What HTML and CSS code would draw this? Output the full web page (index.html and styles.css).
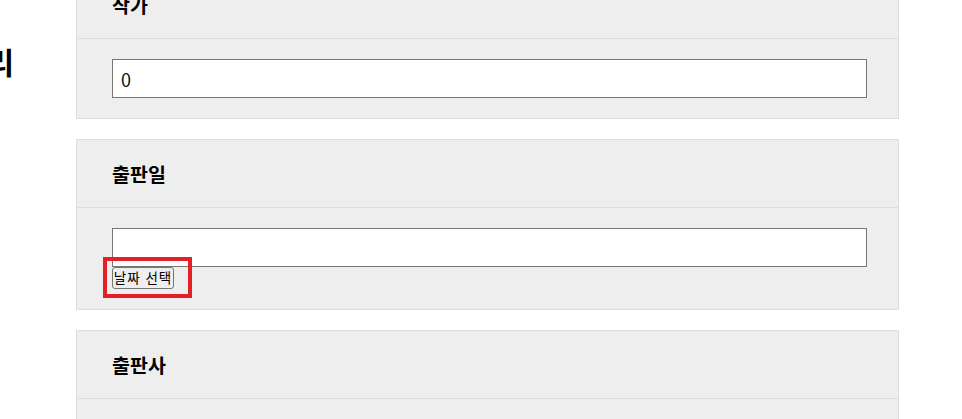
FILE: index.html
```html
<!DOCTYPE html>
<html lang="ko">
<head>
<meta charset="utf-8">
<title>도서 관리</title>
<link rel="stylesheet" href="styles.css">
</head>
<body>
<div class="page">
  <aside class="side">
    <h1 class="title">도서 관리</h1>
  </aside>
  <main class="form">
    <section class="card">
      <div class="card-head"><h3 class="label">작가</h3></div>
      <div class="card-body">
        <input class="field" type="text" value="0">
      </div>
    </section>
    <section class="card">
      <div class="card-head"><h3 class="label">출판일</h3></div>
      <div class="card-body">
        <input class="field" type="text" value="">
        <div class="date-actions">
          <button class="date-btn" type="button">날짜 선택</button>
          <span class="highlight"></span>
        </div>
      </div>
    </section>
    <section class="card">
      <div class="card-head"><h3 class="label">출판사</h3></div>
      <div class="card-body">
        <input class="field" type="text" value="">
      </div>
    </section>
  </main>
</div>
</body>
</html>
```
FILE: styles.css
```css
html, body {
  margin: 0;
  padding: 0;
  background: #ffffff;
}
body {
  font-family: "Noto Sans CJK KR", "Noto Sans", sans-serif;
  color: #000;
  overflow: hidden;
}
.page {
  display: flex;
  align-items: flex-start;
  margin-top: -30px;
}
.side {
  width: 14px;
  margin-right: 62px;
  display: flex;
  justify-content: flex-end;
  padding-top: 73px;
}
.title {
  margin: 0;
  font-size: 30px;
  font-weight: 700;
  line-height: 1.2;
  white-space: nowrap;
}
.form {
  width: 823px;
  display: flex;
  flex-direction: column;
  gap: 20px;
}
.card {
  background: #eeeeee;
  border: 1px solid #dcdce1;
}
.card-head {
  height: 67px;
  display: flex;
  align-items: center;
  padding: 0 35px;
  border-bottom: 1px solid #dcdce1;
}
.label {
  margin: 0;
  font-size: 19.5px;
  font-weight: 700;
  line-height: 1;
}
.card-body {
  padding: 20px 31px 20px 35px;
}
.field {
  display: block;
  width: 100%;
  height: 39px;
  box-sizing: border-box;
  margin: 0;
  border: 1px solid #767676;
  border-radius: 0;
  background: #fff;
  padding: 0 8px;
  font-family: "Noto Sans CJK KR", "Noto Sans", sans-serif;
  font-size: 18px;
  color: #111;
}
.date-actions {
  position: relative;
  display: flex;
}
.date-btn {
  height: 22px;
  width: 62px;
  margin: 0;
  padding: 0;
  box-sizing: border-box;
  border: 1px solid #767676;
  border-radius: 3px;
  background: #efefef;
  font-family: "Noto Sans CJK KR", "Noto Sans", sans-serif;
  font-size: 13.5px;
  letter-spacing: 1px;
  line-height: 1;
  color: #000;
  white-space: nowrap;
}
.highlight {
  position: absolute;
  left: -9px;
  top: -10px;
  width: 89px;
  height: 41px;
  box-sizing: border-box;
  border: 4px solid #e32027;
  pointer-events: none;
}
```
